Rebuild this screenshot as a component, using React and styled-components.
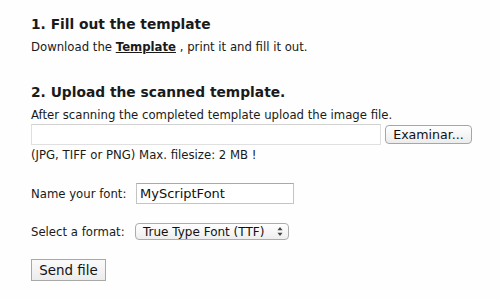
import React from 'react';
import styled, { createGlobalStyle } from 'styled-components';

const GlobalStyle = createGlobalStyle`
    body {
        margin: 0;
        background: #fefefe;
        font-family: "DejaVu Sans", Verdana, sans-serif;
        color: #1a1a1a;
    }
`;

const Page = styled.div`
    padding: 16px 0 0 31px;
    width: 469px;
    height: 283px;
`;

const Heading = styled.h2`
    margin: 0;
    font-size: 13.8px;
    line-height: 16px;
    font-weight: bold;
`;

const Text = styled.p`
    margin: ${(props) => props.margin || '8px 0 0'};
    font-size: 11.7px;
    line-height: 14px;
`;

const Link = styled.a`
    font-weight: bold;
    color: #1a1a1a;
    text-decoration: underline;
`;

const Section = styled.section`
    margin-top: ${(props) => props.top || '0'};
`;

const FileRow = styled.div`
    display: flex;
    align-items: center;
    gap: 4px;
    margin-top: 2px;
`;

const FileBox = styled.div`
    width: 348px;
    height: 19px;
    border: 1px solid #e0e0e0;
    border-top-color: #d2d2d2;
    background: #fff;
`;

const MacButton = styled.button`
    box-sizing: border-box;
    width: 87px;
    height: 19px;
    padding: 0;
    font-family: inherit;
    font-size: 12.6px;
    color: #111;
    border: 1px solid #a6a6a6;
    border-radius: 4px;
    background: linear-gradient(#ffffff, #ececec);
`;

const FormRow = styled.div`
    display: flex;
    align-items: center;
    margin-top: ${(props) => props.top};
`;

const Label = styled.label`
    width: ${(props) => props.width};
    font-size: 11.7px;
    line-height: 14px;
`;

const TextInput = styled.input`
    box-sizing: border-box;
    width: 158px;
    height: 21px;
    padding: 0 3px;
    font-family: inherit;
    font-size: 13px;
    color: #111;
    border: 1px solid #c4c4c4;
    border-top-color: #a9a9a9;
    outline: none;
`;

const SelectBox = styled.div`
    box-sizing: border-box;
    display: flex;
    align-items: center;
    justify-content: space-between;
    width: 154px;
    height: 17px;
    padding: 0 5px 0 7px;
    font-size: 12px;
    color: #111;
    border: 1px solid #acacac;
    border-radius: 4px;
    background: linear-gradient(#ffffff, #eeeeee);
`;

const SendButton = styled.button`
    box-sizing: border-box;
    width: 75px;
    height: 22px;
    margin-top: 19px;
    padding: 0;
    font-family: inherit;
    font-size: 13.4px;
    color: #111;
    border: 1px solid #a8a8a8;
    background: linear-gradient(#fafafa, #ececec);
`;

const Arrows = () => (
    <svg width="6" height="9" viewBox="0 0 6 9">
        <path d="M3 0 L5.5 3.2 L0.5 3.2 Z" fill="#444" />
        <path d="M3 9 L5.5 5.8 L0.5 5.8 Z" fill="#444" />
    </svg>
);

const App = () => (
    <Page>
        <GlobalStyle />
        <Section>
            <Heading>1. Fill out the template</Heading>
            <Text>
                Download the <Link href="#">Template</Link> , print it and fill it out.
            </Text>
        </Section>

        <Section top="30px">
            <Heading>2. Upload the scanned template.</Heading>
            <Text>After scanning the completed template upload the image file.</Text>
            <FileRow>
                <FileBox />
                <MacButton>Examinar...</MacButton>
            </FileRow>
            <Text margin="3px 0 0">(JPG, TIFF or PNG) Max. filesize: 2 MB !</Text>
        </Section>

        <FormRow top="21px">
            <Label width="105px">Name your font:</Label>
            <TextInput defaultValue="MyScriptFont" />
        </FormRow>
        <FormRow top="19px">
            <Label width="104px">Select a format:</Label>
            <SelectBox>
                True Type Font (TTF)
                <Arrows />
            </SelectBox>
        </FormRow>
        <SendButton>Send file</SendButton>
    </Page>
);

export default App;
